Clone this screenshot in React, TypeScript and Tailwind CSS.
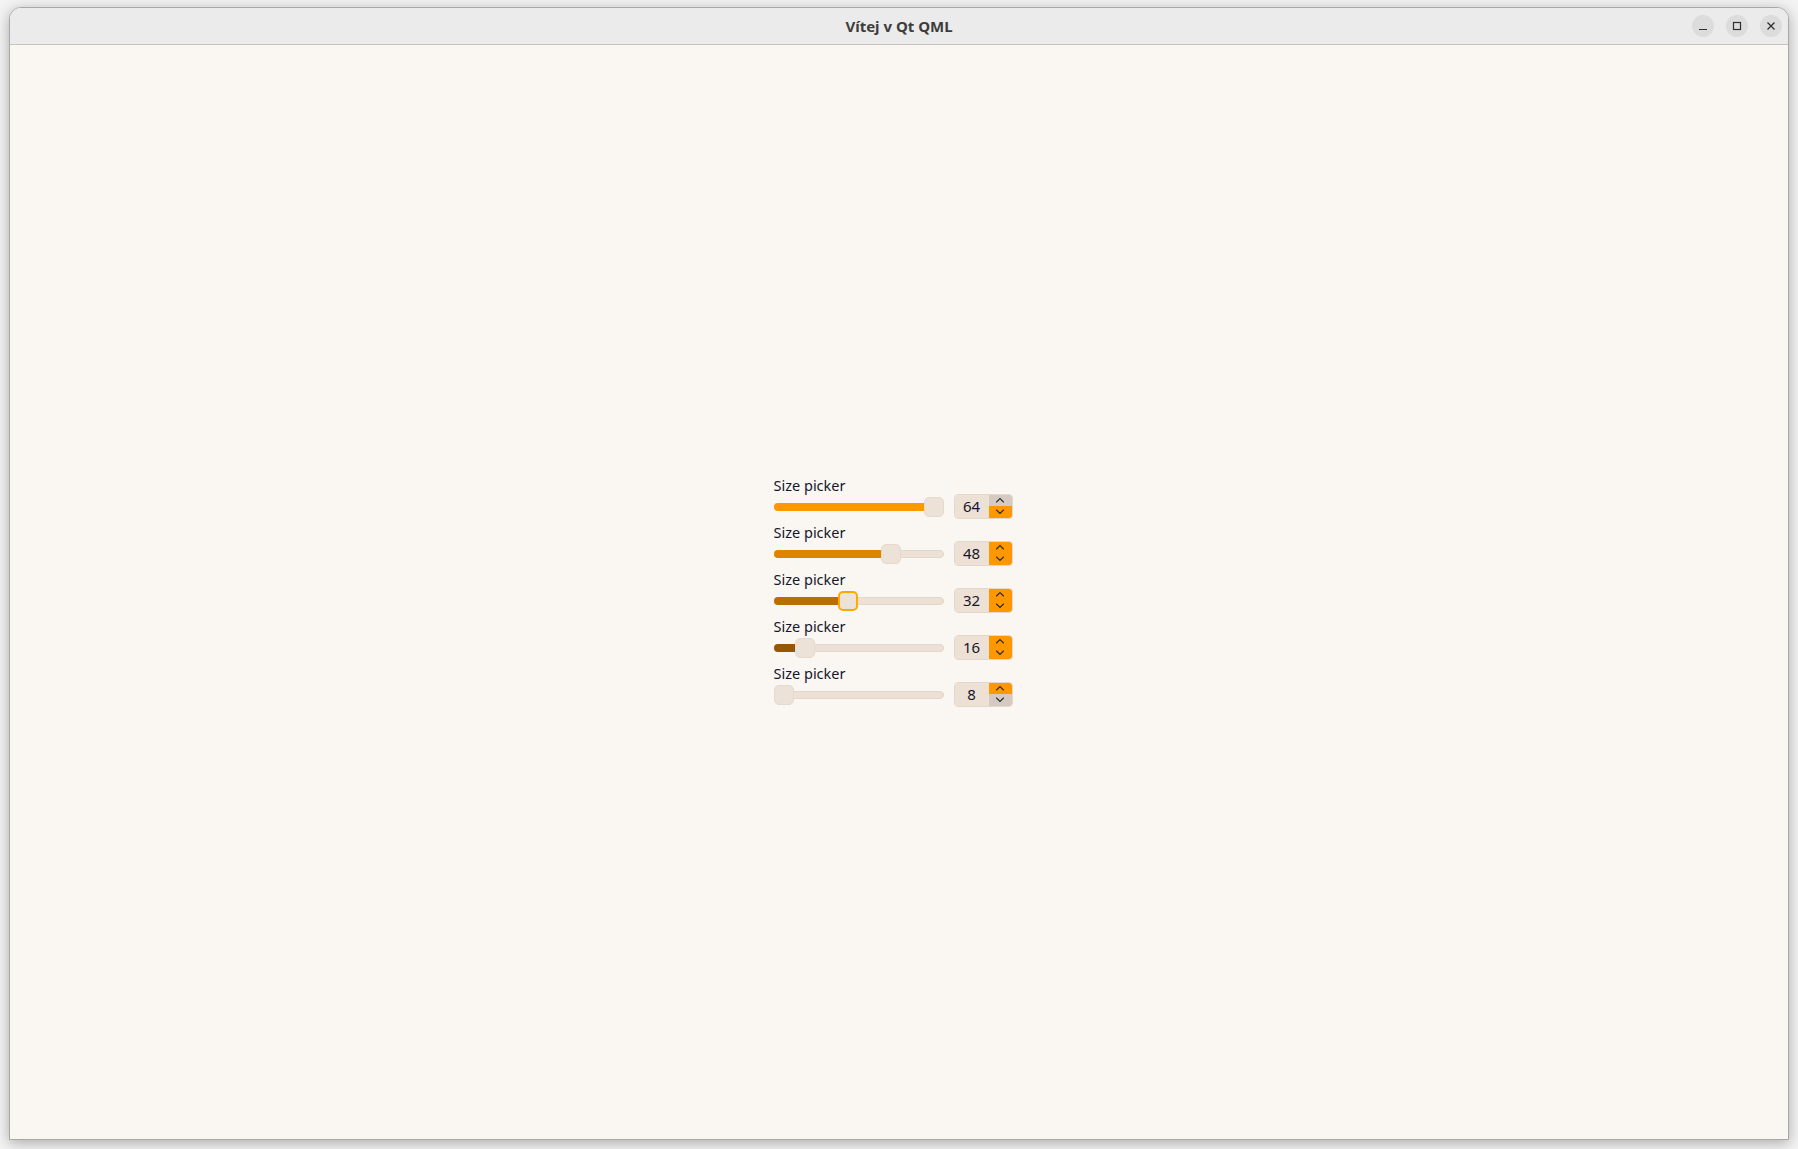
import React from "react";

const MIN = 8;
const MAX = 64;

type Row = { value: number; fill: string; focused?: boolean };

const rows: Row[] = [
  { value: 64, fill: "#ff9800" },
  { value: 48, fill: "#de8500" },
  { value: 32, fill: "#b86e00", focused: true },
  { value: 16, fill: "#975700" },
  { value: 8, fill: "#ff9800" },
];

const Chevron = ({ up }: { up?: boolean }) => (
  <svg width="10" height="6" viewBox="0 0 10 6" className="block">
    <path
      d={up ? "M1.5 5 L5 1.5 L8.5 5" : "M1.5 1 L5 4.5 L8.5 1"}
      fill="none"
      stroke="#2b2b2b"
      strokeWidth="1.1"
      strokeLinecap="round"
    />
  </svg>
);

const SizePicker = ({ row }: { row: Row }) => {
  const travel = 150;
  const left = ((row.value - MIN) / (MAX - MIN)) * travel;
  const atMax = row.value >= MAX;
  const atMin = row.value <= MIN;

  return (
    <div className="flex flex-col">
      <div className="h-[16px] text-[14.5px] leading-[14px] text-[#16162a]">Size picker</div>
      <div className="flex items-start gap-[10px] h-[25px]">
        {/* slider */}
        <div className="relative mt-[3px] w-[170px] h-[20px] flex items-center">
          <div className="w-full h-[8px] rounded-full bg-[#ede1d6] border border-[#e3d6ca]" />
          {row.value > MIN && (
            <div
              className="absolute left-0 top-[6px] h-[8px] rounded-full"
              style={{ width: left + 10, backgroundColor: row.fill }}
            />
          )}
          <div
            className={
              "absolute top-0 w-[20px] h-[20px] rounded-[5px] bg-[#ede2d8] " +
              (row.focused ? "border-2 border-[#ffa800]" : "border border-[#e6d9cd]")
            }
            style={{ left }}
          />
        </div>
        {/* spinbox */}
        <div className="flex h-[25px] w-[59px] rounded-[4px] overflow-hidden border border-[#e4d8cc]">
          <div className="flex-1 bg-[#ede1d6] flex items-center justify-center text-[15px] text-[#16162a]">
            {row.value}
          </div>
          <div className="w-[23px] flex flex-col">
            <div
              className={
                "flex-1 flex items-center justify-center " +
                (atMax ? "bg-[#d4cac1]" : "bg-[#ff9800]")
              }
            >
              <Chevron up />
            </div>
            <div
              className={
                "flex-1 flex items-center justify-center " +
                (atMin ? "bg-[#d4cac1]" : "bg-[#ff9800]")
              }
            >
              <Chevron />
            </div>
          </div>
        </div>
      </div>
    </div>
  );
};

const WinButton = ({ children }: { children: React.ReactNode }) => (
  <div className="w-[22px] h-[22px] rounded-full bg-[#dcdcdc] flex items-center justify-center">
    {children}
  </div>
);

export default function App() {
  return (
    <div
      className="w-[1798px] h-[1149px] bg-[#f3f3f3] pt-[7px] pl-[9px] overflow-hidden"
      style={{ fontFamily: '"Noto Sans", "Open Sans", sans-serif' }}
    >
      <div className="w-[1780px] h-[1133px] flex flex-col rounded-t-[12px] border border-[#a8a8a8] bg-[#faf7f2] shadow-[0_3px_14px_rgba(0,0,0,0.3)] overflow-hidden">
        {/* title bar */}
        <div className="relative h-[37px] shrink-0 bg-[#ebebeb] border-b border-[#c4c4c4] flex items-center justify-center">
          <span className="text-[15px] font-bold text-[#3d3d3d]" style={{ fontFamily: '"Noto Sans", sans-serif' }}>
            Vítej v Qt QML
          </span>
          <div className="absolute right-[6px] top-[7px] flex gap-[12px]">
            <WinButton>
              <svg width="10" height="10" viewBox="0 0 10 10">
                <path d="M1 8.5 H9" stroke="#2e2e2e" strokeWidth="1.2" />
              </svg>
            </WinButton>
            <WinButton>
              <svg width="10" height="10" viewBox="0 0 10 10">
                <rect x="1.5" y="1.5" width="7" height="7" fill="none" stroke="#2e2e2e" strokeWidth="1.2" />
              </svg>
            </WinButton>
            <WinButton>
              <svg width="10" height="10" viewBox="0 0 10 10">
                <path d="M1.5 1.5 L8.5 8.5 M8.5 1.5 L1.5 8.5" stroke="#2e2e2e" strokeWidth="1.3" />
              </svg>
            </WinButton>
          </div>
        </div>
        {/* content */}
        <div className="flex-1 flex items-center justify-center">
          <div className="flex flex-col gap-[6px] mr-[12px]">
            {rows.map((r) => (
              <SizePicker key={r.value} row={r} />
            ))}
          </div>
        </div>
      </div>
    </div>
  );
}
